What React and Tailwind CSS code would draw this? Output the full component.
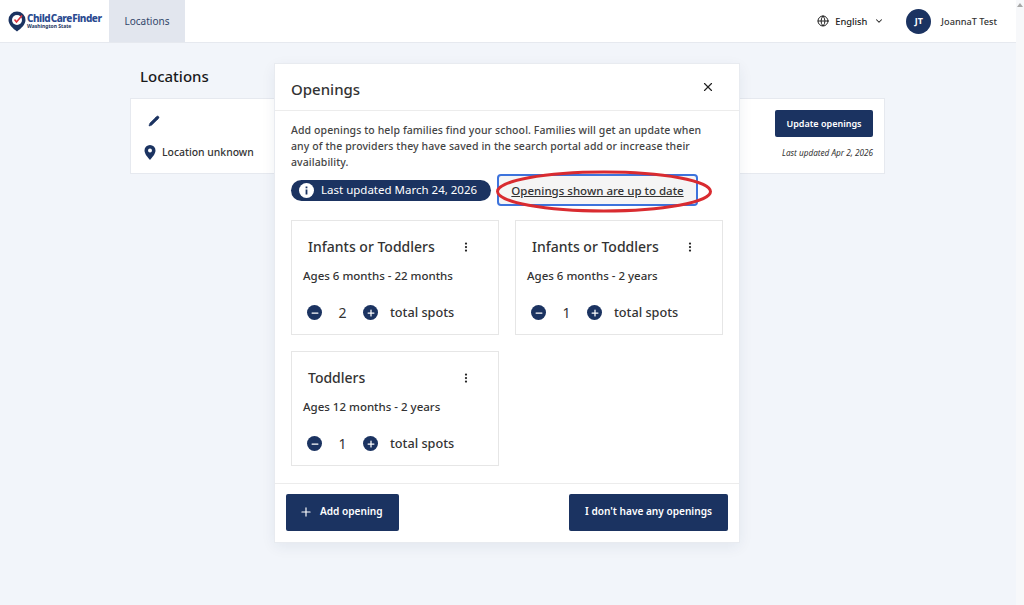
import { Globe, ChevronDown, Pencil, X, MoreVertical, Plus, Minus } from "lucide-react";

const NAVY = "#1b3361";

function Logo() {
  return (
    <div className="flex items-center w-[109px] pl-2 shrink-0">
      <svg width="18" height="21" viewBox="0 0 18 21" className="shrink-0">
        <path d="M9 0.5a8.5 8.5 0 0 1 8.5 8.5c0 4.6-4.6 8.6-8.5 11.5C5.1 17.6 0.500 13.600 0.500 9A8.500 8.500 0 0 1 9 0.500z" fill="#1b3361" />
        <circle cx="9" cy="9" r="5" fill="#fff" />
        <path d="M6.500 8.500l2 2.500L14 4.500" fill="none" stroke="#d9313c" strokeWidth="1.600" />
      </svg>
      <div className="ml-[1px] flex flex-col text-[#2a4a8f] leading-none">
        <span className="text-[10px] font-extrabold tracking-[-0.5px] [word-spacing:-1.5px] whitespace-nowrap leading-[11px]">Child Care Finder</span>
        <span className="text-[5px] font-bold text-[#1b3361] leading-[5px] whitespace-nowrap">Washington State</span>
      </div>
    </div>
  );
}

function Header() {
  return (
    <header className="h-[43px] bg-white border-b border-[#e6e9ef] flex items-stretch shrink-0">
      <Logo />
      <div className="w-[76px] bg-[#e2e6ee] flex items-center justify-center pt-[1px] text-[10px] text-[#33466b]">Locations</div>
      <div className="ml-auto flex items-center">
        <Globe size={12} strokeWidth={2} className="text-[#222]" />
        <span className="ml-[6px] pt-[1px] text-[9.300px] font-medium text-[#222]">English</span>
        <ChevronDown size={10} strokeWidth={2.5} className="ml-[7px] text-[#222]" />
        <div className="ml-[22px] w-[25px] h-[25px] rounded-full bg-[#1b3361] text-white flex items-center justify-center text-[9px] font-bold">JT</div>
        <span className="ml-[10px] mr-[19px] pt-[1px] text-[9.200px] font-medium text-[#333]">JoannaT Test</span>
      </div>
    </header>
  );
}

function LocationCard() {
  return (
    <div className="mt-[11px] h-[76px] bg-white border border-[#e6e9ef] flex justify-between">
      <div className="pl-[13px] pt-[16px]">
        <Pencil size={12} fill={NAVY} stroke={NAVY} strokeWidth={1} className="ml-[4px]" />
        <div className="mt-[18px] flex items-center">
          <svg width="12" height="15" viewBox="0 0 12 15">
            <path d="M6 0a5.500 5.500 0 0 1 5.500 5.500C11.500 9 8 12.500 6 15 4 12.500 0.500 9 0.500 5.500A5.500 5.500 0 0 1 6 0z" fill="#1b3361" />
            <circle cx="6" cy="5.500" r="2" fill="#fff" />
          </svg>
          <span className="ml-[6px] text-[10.400px] font-medium text-[#333]">Location unknown</span>
        </div>
      </div>
      <div className="pr-[11px] pt-[11px] flex flex-col items-end">
        <button className="w-[98px] h-[27px] rounded-[2px] bg-[#1b3361] text-white text-[9px] font-semibold">Update openings</button>
        <span className="mt-[10px] text-[8.200px] italic text-[#333]">Last updated Apr 2, 2026</span>
      </div>
    </div>
  );
}

function RoundBtn({ children }) {
  return (
    <span className="w-[15px] h-[15px] rounded-full bg-[#1b3361] text-white flex items-center justify-center shrink-0">
      {children}
    </span>
  );
}

function OpeningCard({ title, ages, count }) {
  return (
    <div className="h-[115px] border border-[#e6e6e6] bg-white">
      <div className="mt-[16px] pl-[16px] pr-[26px] flex items-center justify-between">
        <span className="text-[14px] leading-[20px] text-[#333] font-medium">{title}</span>
        <MoreVertical size={12} strokeWidth={2.5} className="text-[#222]" />
      </div>
      <p className="mt-[11px] pl-[11px] text-[11.500px] leading-[16px] font-medium text-[#333]">{ages}</p>
      <div className="mt-[18px] pl-[15px] flex items-center">
        <RoundBtn><Minus size={10} strokeWidth={3} /></RoundBtn>
        <span className="w-[41px] text-center text-[14px] text-[#333]">{count}</span>
        <RoundBtn><Plus size={10} strokeWidth={3} /></RoundBtn>
        <span className="ml-[12px] pt-[1px] text-[12.700px] font-medium text-[#333]">total spots</span>
      </div>
    </div>
  );
}

function Modal() {
  return (
    <div className="absolute left-[275px] top-[64px] w-[464px] h-[478px] bg-white shadow-[0_0_0_1px_#e8ebf0,0_4px_14px_rgba(30,50,90,0.08)] flex flex-col">
      <div className="h-[47px] border-b border-[#ececec] flex items-center justify-between pl-[16px] pr-[24px] shrink-0">
        <h2 className="text-[15px] font-medium text-[#333] pt-[4px]">Openings</h2>
        <X size={14} strokeWidth={2} className="text-[#222] -mt-[1px]" />
      </div>
      <div className="flex-1 px-[16px] pt-[11px]">
        <p className="pr-[20px] text-[10.500px] leading-[16px] font-medium text-[#444] tracking-[0.1px]">
          Add openings to help families find your school. Families will get an update when any of the providers they have saved in the search portal add or increase their availability.
        </p>
        <div className="relative mt-[4px] flex items-center">
          <div className="h-[21px] w-[200px] rounded-full bg-[#1b3361] text-white flex items-center pl-[7px] shrink-0">
            <svg width="17" height="17" viewBox="0 0 17 17" className="shrink-0">
              <circle cx="8.500" cy="8.500" r="7.500" fill="#fff" />
              <rect x="7.600" y="7.500" width="1.800" height="5" fill="#1b3361" />
              <rect x="7.600" y="4.500" width="1.800" height="1.800" fill="#1b3361" />
            </svg>
            <span className="ml-[6px] text-[11.500px] whitespace-nowrap">Last updated March 24, 2026</span>
          </div>
          <button className="ml-[6px] w-[201px] h-[32px] rounded-[4px] border-2 border-[#3d73dc] bg-[#f5f5f5] pt-[1px] text-[11.500px] font-medium text-[#333] underline whitespace-nowrap">
            Openings shown are up to date
          </button>
          <svg width="216" height="43" viewBox="0 0 216 43" className="absolute left-[205px] -top-[4.500px] pointer-events-none">
            <ellipse cx="108" cy="21.500" rx="106.500" ry="19.500" fill="none" stroke="#d92b30" strokeWidth="3" />
          </svg>
        </div>
        <div className="mt-[14px] grid grid-cols-2 gap-[16px] w-[432px]">
          <OpeningCard title="Infants or Toddlers" ages="Ages 6 months - 22 months" count="2" />
          <OpeningCard title="Infants or Toddlers" ages="Ages 6 months - 2 years" count="1" />
          <OpeningCard title="Toddlers" ages="Ages 12 months - 2 years" count="1" />
        </div>
      </div>
      <div className="h-[59px] border-t border-[#ececec] flex items-center justify-between px-[11px] pb-[2px] shrink-0">
        <button className="w-[113px] h-[37px] rounded-[2px] bg-[#1b3361] text-white text-[10.100px] font-semibold flex items-center pl-[13px]">
          <Plus size={14} strokeWidth={2} />
          <span className="ml-[7px]">Add opening</span>
        </button>
        <button className="w-[159px] h-[37px] rounded-[2px] bg-[#1b3361] text-white text-[10.100px] font-semibold">I don't have any openings</button>
      </div>
    </div>
  );
}

export default function App() {
  return (
    <div className="relative h-[605px] w-[1024px] overflow-hidden bg-[#f2f5fa] flex font-['Noto_Sans','Open_Sans',sans-serif]">
      <div className="flex-1 flex flex-col min-w-0">
        <Header />
        <main className="pl-[130px] w-[885px]">
          <h1 className="mt-[22px] pl-[10px] text-[15px] leading-[22px] font-medium text-[#1a1a1a]">Locations</h1>
          <LocationCard />
        </main>
      </div>
      <div className="w-[8px] bg-[#f7f8fa] flex justify-center pt-[3px] shrink-0">
        <span className="w-0 h-0 border-x-[3px] border-x-transparent border-b-[4px] border-b-[#a8a8a8]" />
      </div>
      <Modal />
    </div>
  );
}
